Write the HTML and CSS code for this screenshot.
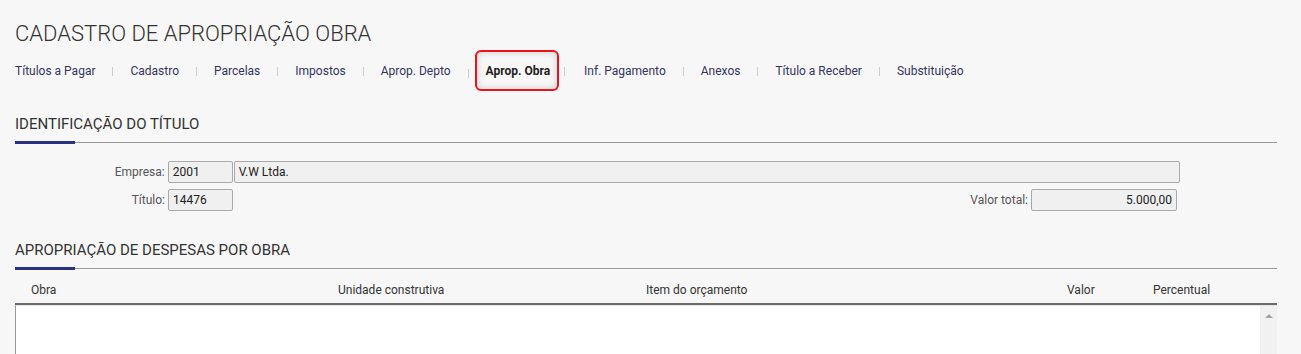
FILE: index.html
```html
<!DOCTYPE html>
<html lang="pt-BR">
  <head>
    <meta charset="UTF-8" />
    <meta name="viewport" content="width=device-width, initial-scale=1.0" />
    <title>Cadastro de Apropriação Obra</title>
    <link rel="stylesheet" href="styles.css">
  </head>
  <body>
    <h1 class="page-title">CADASTRO DE APROPRIAÇÃO OBRA</h1>

    <ul class="tabs">
      <li class="tab">Títulos a Pagar</li>
      <li class="tab">Cadastro</li>
      <li class="tab">Parcelas</li>
      <li class="tab">Impostos</li>
      <li class="tab">Aprop. Depto</li>
      <li class="tab active">Aprop. Obra</li>
      <li class="tab">Inf. Pagamento</li>
      <li class="tab">Anexos</li>
      <li class="tab">Título a Receber</li>
      <li class="tab">Substituição</li>
    </ul>

    <h2 class="section-title">IDENTIFICAÇÃO DO TÍTULO</h2>
    <div class="form">
      <div class="form-row">
        <label class="label">Empresa:</label>
        <div class="field code">2001</div>
        <div class="field name">V.W Ltda.</div>
      </div>
      <div class="form-row">
        <label class="label">Título:</label>
        <div class="field code">14476</div>
        <div class="spacer"></div>
        <label class="label-inline">Valor total:</label>
        <div class="field total">5.000,00</div>
      </div>
    </div>

    <h2 class="section-title second">APROPRIAÇÃO DE DESPESAS POR OBRA</h2>
    <div class="grid">
      <div class="grid-head">
        <div class="col c-obra">Obra</div>
        <div class="col c-unidade">Unidade construtiva</div>
        <div class="col c-item">Item do orçamento</div>
        <div class="col c-valor">Valor</div>
        <div class="col c-perc">Percentual</div>
      </div>
      <div class="grid-body">
        <div class="rows"></div>
        <div class="scrollbar"><span class="arrow-up"></span></div>
      </div>
    </div>
  </body>
</html>
```

FILE: styles.css
```css
body {
  margin: 0;
  padding: 0 24px 0 15px;
  background-color: #f7f7f7;
  font-family: Roboto, "Liberation Sans", Arial, sans-serif;
  color: #333;
}
.page-title {
  margin: 22px 0 0;
  font-size: 22px;
  line-height: 24px;
  font-weight: 300;
  color: #333;
}
.tabs {
  list-style: none;
  margin: 4px 0 0;
  padding: 0;
  display: flex;
  align-items: center;
  height: 41px;
  font-size: 12px;
}
.tab {
  position: relative;
  height: 41px;
  display: flex;
  align-items: center;
  padding: 0 17px 0 18px;
  color: #34345e;
}
.tab:first-child {
  padding-left: 0;
}
.tab + .tab::before {
  content: "";
  position: absolute;
  left: 0;
  top: 17px;
  width: 1px;
  height: 9px;
  background-color: #ccc;
}
.tab.active {
  font-weight: bold;
  color: #222;
  margin: 0 -1px 0 7px;
  padding: 0 7px 0 9px;
  border: 2px solid #e8141c;
  border-radius: 6px;
  box-shadow: inset 0 0 7px rgba(0, 0, 0, 0.18);
  height: 37px;
}
.tab.active::before {
  left: -9px;
}
.tab.active + .tab::before {
  left: 6px;
}
.tab.active + .tab {
  padding-left: 26px;
}
.section-title {
  position: relative;
  margin: 24px 0 0;
  font-size: 15px;
  line-height: 18px;
  font-weight: 400;
  color: #333;
  padding-bottom: 9px;
  border-bottom: 1px solid #9a9a9a;
}
.section-title::after {
  content: "";
  position: absolute;
  left: 0;
  bottom: -2px;
  width: 60px;
  height: 3px;
  background-color: #2a3282;
}
.section-title.second {
  margin-top: 30px;
}
.form {
  padding-top: 18px;
  font-size: 12px;
}
.form-row {
  display: flex;
  align-items: center;
  margin-bottom: 6px;
  width: 1165px;
}
.label {
  width: 150px;
  text-align: right;
  color: #555;
  padding-right: 3px;
}
.label-inline {
  color: #555;
  padding-right: 3px;
}
.spacer {
  flex: 1;
}
.field {
  box-sizing: border-box;
  height: 22px;
  line-height: 20px;
  padding: 0 4px;
  border: 1px solid #a9a9a9;
  border-radius: 2px;
  background-color: #f0f0f0;
  color: #222;
}
.code {
  width: 65px;
}
.name {
  width: 948px;
  margin-left: 1px;
}
.total {
  width: 146px;
  text-align: right;
  margin-right: 3px;
}
.grid {
  margin-top: 14px;
  font-size: 12px;
}
.grid-head {
  display: grid;
  grid-template-columns: 307px 308px 421px 86px 1fr;
  height: 20px;
  border-bottom: 2px solid #6a6a6a;
}
.col {
  padding-left: 16px;
  line-height: 14px;
  color: #333;
}
.grid-body {
  display: flex;
  height: 60px;
  border-top: 1px solid #e6e6e6;
  border-left: 1px solid #999;
  background-color: #fff;
}
.rows {
  flex: 1;
}
.scrollbar {
  width: 17px;
  background-color: #f1f1f1;
  display: flex;
  justify-content: center;
}
.arrow-up {
  margin-top: 8px;
  width: 0;
  height: 0;
  border-left: 4px solid transparent;
  border-right: 4px solid transparent;
  border-bottom: 4px solid #a3a3a3;
}
```
